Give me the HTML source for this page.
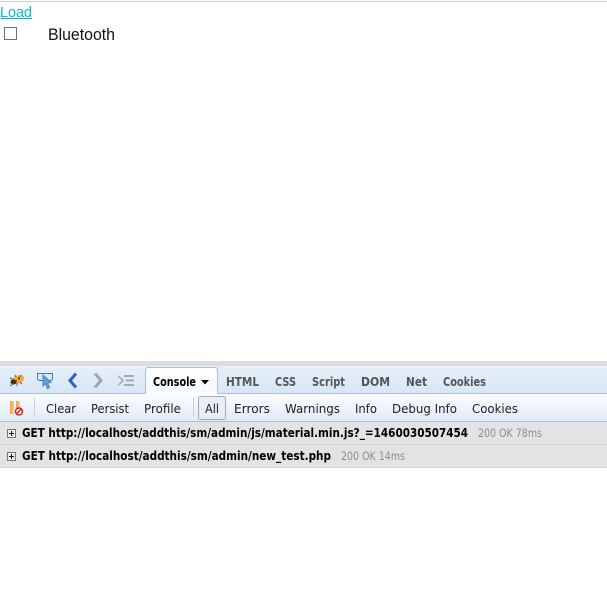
<!DOCTYPE html>
<html><head><meta charset="utf-8"><style>
html,body{margin:0;padding:0;background:#fff;width:607px;height:590px;overflow:hidden}
svg{display:block}
text{font-family:"Liberation Sans",sans-serif}
.b{font-family:"DejaVu Sans",sans-serif;font-weight:bold;font-size:12px;fill:#555}
.t{font-family:"DejaVu Sans",sans-serif;font-size:12.5px;fill:#222}
.r{font-family:"DejaVu Sans",sans-serif;font-weight:bold;font-size:12px;fill:#000}
.g{font-family:"DejaVu Sans",sans-serif;font-size:11.5px;fill:#8c8c8c}
</style></head><body>
<svg width="607" height="590" viewBox="0 0 607 590" xmlns="http://www.w3.org/2000/svg">
<defs>
<linearGradient id="tb" x1="0" y1="0" x2="0" y2="1"><stop offset="0" stop-color="#e6f0fa"/><stop offset="1" stop-color="#d8e6f5"/></linearGradient>
<linearGradient id="tl" x1="0" y1="0" x2="0" y2="1"><stop offset="0" stop-color="#fcfdff"/><stop offset="1" stop-color="#dfeaf6"/></linearGradient>
<linearGradient id="act" x1="0" y1="0" x2="0" y2="1"><stop offset="0" stop-color="#fff"/><stop offset="1" stop-color="#f4f8fd"/></linearGradient>
<linearGradient id="pa" x1="0" y1="0" x2="1" y2="0"><stop offset="0" stop-color="#f0a040"/><stop offset="1" stop-color="#f8cc98"/></linearGradient>
</defs>
<rect x="0" y="1" width="607" height="1" fill="#ccc"/>
<text x="0" y="17" font-size="15" fill="#00bcd4" textLength="32" lengthAdjust="spacingAndGlyphs">Load</text>
<rect x="1" y="18" width="31" height="1" fill="#00bcd4"/>
<rect x="4.500" y="27.500" width="12" height="12" fill="#fff" stroke="#707070"/>
<text x="48" y="40" font-size="17" fill="#111" textLength="67" lengthAdjust="spacingAndGlyphs">Bluetooth</text>

<rect x="0" y="361" width="607" height="5" fill="#dcdcdc"/>
<rect x="0" y="366" width="607" height="27" fill="url(#tb)"/>
<rect x="0" y="393" width="607" height="1" fill="#a9bfd6"/>
<rect x="0" y="394" width="607" height="27" fill="url(#tl)"/>
<rect x="0" y="421" width="607" height="1" fill="#a9c0d8"/>

<!-- bug -->
<ellipse cx="18" cy="379.500" rx="6.500" ry="4" fill="#eeb040" transform="rotate(-20 18 379.500)"/>
<ellipse cx="13.500" cy="382" rx="3" ry="2.500" fill="#40301a"/>
<path d="M10 378l3 1.500M10 386l3-2M17 386l0-3M22 384l-2-2M15 375l1 2M21 375l-1 2" stroke="#6a5a40" stroke-width="1" fill="none"/>
<circle cx="19" cy="378.500" r="1.200" fill="#7a3a10"/>
<circle cx="16" cy="381" r="1" fill="#7a3a10"/>
<!-- inspect -->
<path d="M37.500 373.500H52.500V379.500L51 380.500H39L37.500 379Z" fill="#dce9f8" stroke="#3f78c4" stroke-width="1"/>
<path d="M43 375L43 386L45.500 383.500L47.500 388.500L49.500 387.500L47.500 383L51 382.500Z" fill="#6f9fe0" stroke="#4a80cc" stroke-width="1"/>
<!-- back / forward -->
<path d="M76 373.500L70 380.500L76 387.500" fill="none" stroke="#2a62c8" stroke-width="3"/>
<path d="M95 373.500L101 380.500L95 387.500" fill="none" stroke="#a5a5a5" stroke-width="3"/>
<!-- stack -->
<path d="M118.500 376L123 380.500L118.500 385" fill="none" stroke="#a8a8a8" stroke-width="1.500"/>
<path d="M124 376H134M126 380.500H134M124 385H134" fill="none" stroke="#a8a8a8" stroke-width="2"/>

<!-- Console tab -->
<path d="M145.500 394V370.500Q145.500 367.500 148.500 367.500H215Q217.500 367.500 217.500 370.500V394" fill="url(#act)" stroke="#a9bfd6"/>
<rect x="146" y="392" width="71" height="3" fill="#fcfdff"/>
<text x="153" y="386" class="r" textLength="43" lengthAdjust="spacingAndGlyphs">Console</text>
<path d="M201 380H209L205 384.500Z" fill="#000"/>
<text x="226" y="386" class="b" textLength="33" lengthAdjust="spacingAndGlyphs">HTML</text>
<text x="275" y="386" class="b" textLength="21" lengthAdjust="spacingAndGlyphs">CSS</text>
<text x="312" y="386" class="b" textLength="33" lengthAdjust="spacingAndGlyphs">Script</text>
<text x="361" y="386" class="b" textLength="29" lengthAdjust="spacingAndGlyphs">DOM</text>
<text x="406" y="386" class="b" textLength="21" lengthAdjust="spacingAndGlyphs">Net</text>
<text x="443" y="386" class="b" textLength="43" lengthAdjust="spacingAndGlyphs">Cookies</text>

<!-- pause icon -->
<rect x="10" y="401" width="4" height="13" fill="url(#pa)"/>
<rect x="16" y="401" width="4" height="13" fill="url(#pa)"/>
<circle cx="19" cy="411.500" r="3.500" fill="#fff" stroke="#e02020" stroke-width="1.500"/>
<path d="M16.500 414L21.500 409" stroke="#e02020" stroke-width="1.500"/>
<rect x="34" y="398" width="1" height="19" fill="#c4d2e2"/>
<rect x="193" y="398" width="1" height="19" fill="#c4d2e2"/>

<text x="46" y="413" class="t" textLength="30" lengthAdjust="spacingAndGlyphs">Clear</text>
<text x="91" y="413" class="t" textLength="38" lengthAdjust="spacingAndGlyphs">Persist</text>
<text x="144" y="413" class="t" textLength="37" lengthAdjust="spacingAndGlyphs">Profile</text>
<rect x="198.500" y="396.500" width="27" height="23" rx="2" fill="#e9eef4" stroke="#a8a8a8"/>
<text x="205" y="413" class="t" textLength="14" lengthAdjust="spacingAndGlyphs">All</text>
<text x="234" y="413" class="t" textLength="36" lengthAdjust="spacingAndGlyphs">Errors</text>
<text x="285" y="413" class="t" textLength="55" lengthAdjust="spacingAndGlyphs">Warnings</text>
<text x="355" y="413" class="t" textLength="22" lengthAdjust="spacingAndGlyphs">Info</text>
<text x="392" y="413" class="t" textLength="65" lengthAdjust="spacingAndGlyphs">Debug Info</text>
<text x="472" y="413" class="t" textLength="46" lengthAdjust="spacingAndGlyphs">Cookies</text>

<!-- rows -->
<rect x="0" y="422" width="607" height="22" fill="#e3e3e3"/>
<rect x="0" y="444" width="607" height="1" fill="#d2d2d2"/>
<rect x="0" y="445" width="607" height="22" fill="#e3e3e3"/>
<rect x="0" y="467" width="607" height="1" fill="#d2d2d2"/>

<rect x="7.500" y="429.500" width="8" height="8" fill="#eee" stroke="#777"/>
<rect x="9" y="433" width="5" height="1" fill="#111"/>
<rect x="11" y="431" width="1" height="5" fill="#111"/>
<text x="22" y="437" class="r" textLength="446" lengthAdjust="spacingAndGlyphs">GET http://localhost/addthis/sm/admin/js/material.min.js?_=1460030507454</text>
<text x="478" y="437" class="g" textLength="64" lengthAdjust="spacingAndGlyphs">200 OK 78ms</text>

<rect x="7.500" y="452.500" width="8" height="8" fill="#eee" stroke="#777"/>
<rect x="9" y="456" width="5" height="1" fill="#111"/>
<rect x="11" y="454" width="1" height="5" fill="#111"/>
<text x="22" y="460" class="r" textLength="309" lengthAdjust="spacingAndGlyphs">GET http://localhost/addthis/sm/admin/new_test.php</text>
<text x="341" y="460" class="g" textLength="64" lengthAdjust="spacingAndGlyphs">200 OK 14ms</text>
</svg>
</body></html>
